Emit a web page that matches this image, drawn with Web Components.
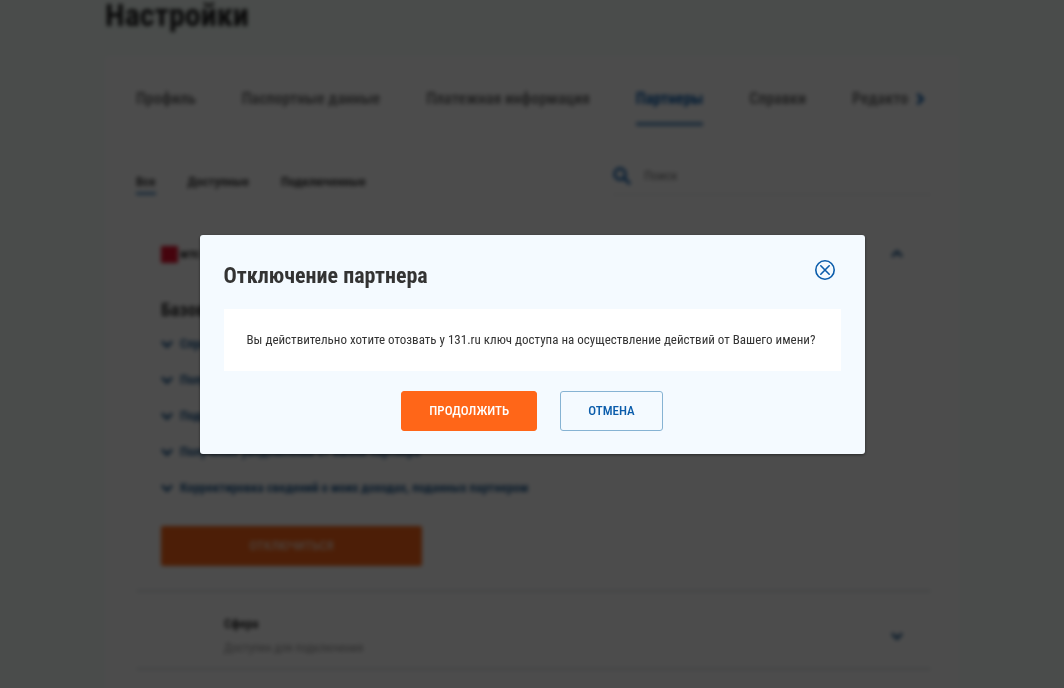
<!DOCTYPE html>
<html lang="ru">
<head>
<meta charset="utf-8">
<title>Настройки</title>
<style>
  html, body { height: 100%; }
  body {
    margin: 0;
    overflow: hidden;
    background: #f7fffb;
    color: #333;
    font: 13px/20px "Roboto Condensed", "Open Sans Condensed", Roboto, sans-serif;
    --blue: #0a5cab;
    --soft-blue: #2a6295;
    --orange: #ff6618;
    --line: #dfe3e5;
  }
</style>
</head>
<body>
<settings-page inert>
  <settings-tabs slot="tabs"></settings-tabs>
  <partner-filter slot="filter"></partner-filter>
  <partner-card slot="partners" open>
    <span slot="name">мтс</span>
    <h2 slot="heading">Базовые</h2>
    <service-link>Справка о доходах</service-link>
    <service-link>Получение чеков</service-link>
    <service-link>Подача заявления</service-link>
    <service-link>Получение уведомлений от имени партнера</service-link>
    <service-link>Корректировка сведений о моих доходах, поданных партнером</service-link>
  </partner-card>
  <partner-row slot="partners">
    <span slot="name">Сфера</span>
    <span slot="status">Доступен для подключения</span>
  </partner-row>
</settings-page>

<confirm-dialog heading="Отключение партнера">
  Вы действительно хотите отозвать у 131.ru ключ доступа на осуществление действий от Вашего имени?
  <action-button slot="actions" kind="primary">Продолжить</action-button>
  <action-button slot="actions" kind="outline">Отмена</action-button>
</confirm-dialog>

<script>
const define = (name, markup, setup) => customElements.define(name, class extends HTMLElement {
  connectedCallback() {
    if (this.shadowRoot) return;
    const tpl = document.createElement('template');
    tpl.innerHTML = markup;
    this.attachShadow({ mode: 'open' }).append(tpl.content.cloneNode(true));
    if (setup) setup(this, this.shadowRoot);
  }
});

define('chevron-icon', `
  <style>
    :host { display: block; width: 12px; height: 12px; color: var(--soft-blue); }
    :host([dir-to="up"]) { transform: rotate(180deg); }
    :host([dir-to="right"]) { transform: rotate(-90deg); color: var(--blue); }
    svg { display: block; width: 100%; height: 100%; }
  </style>
  <svg viewBox="0 0 12 12" fill="none" stroke="currentColor" stroke-width="3" aria-hidden="true"><path d="M1 3.5 6 8.5 11 3.5"/></svg>`);

define('settings-page', `
  <style>
    :host { display: block; filter: blur(2px); padding: 0 16px; }
    .wrap { max-width: 854px; margin: 0 auto; }
    h1 { margin: 0; font-size: 32px; line-height: 30px; padding-bottom: 26px; color: #222; }
    .card { background: #fff; padding: 32px 28px 40px 31px; }
  </style>
  <main class="wrap">
    <h1>Настройки</h1>
    <section class="card">
      <slot name="tabs"></slot>
      <slot name="filter"></slot>
      <slot name="partners"></slot>
    </section>
  </main>`);

define('settings-tabs', `
  <style>
    :host { display: block; }
    nav { display: flex; align-items: flex-start; gap: 46px; white-space: nowrap; }
    a { flex: none; color: #777; text-decoration: none; font-size: 16px; line-height: 22px; font-weight: 700; padding-bottom: 12px; border-bottom: 4px solid transparent; }
    a[aria-current] { color: var(--blue); border-color: #6a9cc8; }
    .end { display: flex; align-items: center; gap: 6px; }
    .end a { padding: 0; border: 0; }
  </style>
  <nav>
    <a href="#profile">Профиль</a>
    <a href="#passport">Паспортные данные</a>
    <a href="#payment">Платежная информация</a>
    <a href="#partners" aria-current="page">Партнеры</a>
    <a href="#refs">Справки</a>
    <span class="end"><a href="#edit">Редакто</a><chevron-icon dir-to="right"></chevron-icon></span>
  </nav>`);

define('partner-filter', `
  <style>
    :host { display: flex; justify-content: space-between; align-items: flex-end; margin-top: 40px; }
    nav { display: flex; gap: 32px; }
    a { color: #444; text-decoration: none; font-weight: 700; line-height: 20px; border-bottom: 3px solid transparent; }
    a[aria-current] { border-color: #5f96c4; }
    label { display: flex; align-items: center; gap: 13px; width: 40%; padding-bottom: 8px; border-bottom: 1px solid var(--line); }
    svg { flex: none; width: 18px; height: 18px; color: var(--blue); }
    input { flex: 1; min-width: 0; border: 0; padding: 0; background: none; font: inherit; line-height: 20px; }
    input::placeholder { color: #777; opacity: 1; }
  </style>
  <nav>
    <a href="#all" aria-current="page">Все</a>
    <a href="#available">Доступные</a>
    <a href="#connected">Подключенные</a>
  </nav>
  <label>
    <svg viewBox="0 0 18 18" fill="none" stroke="currentColor" stroke-width="2.6" aria-hidden="true"><circle cx="7" cy="7" r="5.4"/><path d="M11 11l6 6"/></svg>
    <input type="search" placeholder="Поиск" aria-label="Поиск">
  </label>`);

define('partner-card', `
  <style>
    :host { display: block; margin-top: 49px; padding: 0 25px 24px; border-bottom: 2px solid var(--line); }
    header { display: flex; align-items: center; gap: 2px; font-weight: 700; }
    .logo { width: 17px; height: 17px; background: #e8102c; }
    chevron-icon { margin-left: auto; margin-right: 3px; }
    ::slotted(h2) { margin: 34px 0 12px; font-size: 18px; line-height: 24px; }
    .list { display: flex; flex-direction: column; gap: 16px; }
    button { display: block; width: 35%; min-width: 200px; height: 40px; margin-top: 28px; border: 0; border-radius: 2px; background: var(--orange); color: #ffd9c4; font: inherit; font-weight: 500; text-transform: uppercase; }
  </style>
  <header><span class="logo"></span><slot name="name"></slot><chevron-icon dir-to="up"></chevron-icon></header>
  <slot name="heading"></slot>
  <div class="list"><slot></slot></div>
  <button type="button">Отключиться</button>`);

define('service-link', `
  <style>
    :host { display: block; }
    a { display: flex; align-items: center; gap: 7px; color: var(--soft-blue); font-weight: 700; text-decoration: none; }
  </style>
  <a href="#service"><chevron-icon></chevron-icon><span><slot></slot></span></a>`);

define('partner-row', `
  <style>
    :host { display: flex; align-items: center; justify-content: space-between; padding: 22px 28px 10px 88px; border-bottom: 2px solid var(--line); }
    .text { display: grid; gap: 4px; }
    .name { font-weight: 700; font-size: 13px; line-height: 20px; }
    .status { color: #999; font-size: 12px; }
  </style>
  <div class="text"><div class="name"><slot name="name"></slot></div><div class="status"><slot name="status"></slot></div></div>
  <chevron-icon></chevron-icon>`);

define('action-button', `
  <style>
    :host { display: block; }
    button { display: block; height: 40px; padding: 0 27px; border: 1px solid #86b3d3; border-radius: 3px; background: transparent; color: var(--blue); font: inherit; line-height: 20px; font-weight: 500; text-transform: uppercase; cursor: pointer; }
    :host([kind="primary"]) button { background: var(--orange); border-color: var(--orange); color: #fff; }
  </style>
  <button type="button"><slot></slot></button>`);

define('confirm-dialog', `
  <style>
    :host { position: fixed; inset: 0; display: flex; align-items: center; justify-content: center; padding: 16px; background: rgba(0, 0, 0, .7); }
    section { box-sizing: border-box; width: 100%; max-width: 665px; padding: 24px 24px 23px; background: #f4faff; border-radius: 3px; box-shadow: 0 1px 3px rgba(0, 0, 0, .5); }
    header { display: flex; align-items: flex-start; justify-content: space-between; }
    h2 { margin: 0; font-size: 22px; line-height: 34px; font-weight: 700; color: #333; }
    .close { flex: none; width: 22px; height: 22px; margin: 0 5px 0 0; padding: 0; border: 0; background: none; color: var(--blue); cursor: pointer; }
    svg { display: block; }
    p { margin: 16px 0 20px; padding: 21px 23px; background: #fff; }
    footer { display: flex; justify-content: center; gap: 23px; }
  </style>
  <section role="dialog" aria-modal="true" aria-labelledby="title">
    <header>
      <h2 id="title"></h2>
      <button class="close" type="button" aria-label="Закрыть">
        <svg width="22" height="22" viewBox="0 0 22 22" fill="none" stroke="currentColor" stroke-width="1.6" stroke-linecap="round"><circle cx="11" cy="11" r="9.2"/><path d="M6.8 6.8l8.4 8.4M15.2 6.8l-8.4 8.4"/></svg>
      </button>
    </header>
    <p><slot></slot></p>
    <footer><slot name="actions"></slot></footer>
  </section>`, (host, root) => {
    root.getElementById('title').textContent = host.getAttribute('heading');
  });
</script>
</body>
</html>
